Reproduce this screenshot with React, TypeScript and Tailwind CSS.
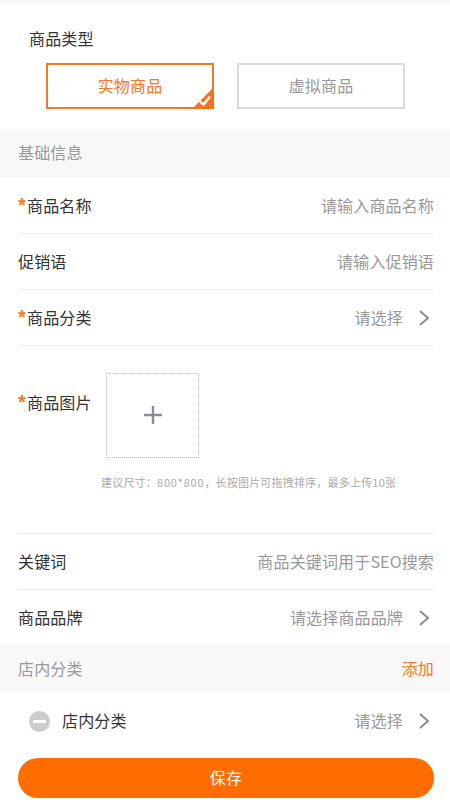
const font = { fontFamily: '"Noto Sans CJK SC", "Liberation Sans", sans-serif' }

function Chevron() {
  return (
    <svg width="12" height="18" viewBox="0 0 12 18" fill="none" className="ml-[15px] mr-[4px]">
      <path d="M2 2l8 7-8 7" stroke="#8a8a8a" strokeWidth="1.9" />
    </svg>
  )
}

function Star() {
  return <span className="inline-block w-[9px] font-['Liberation_Sans'] text-[20px] leading-[16px] font-bold text-[#f07a28]">*</span>
}

function Row({ label, value, required, arrow, border = true, height = 'h-[56px]' }: { label: string; value: string; required?: boolean; arrow?: boolean; border?: boolean; height?: string }) {
  return (
    <div className={`flex ${height} items-center justify-between text-[16px] ${border ? 'border-b border-[#eeeeee]' : ''}`}>
      <div className="-mt-[2px] text-[#333333]">
        {required && <Star />}
        {label}
      </div>
      <div className="flex items-center text-[#999999]">
        <span className="-mt-[2px]">{value}</span>
        {arrow && <Chevron />}
      </div>
    </div>
  )
}

function SectionHeader({ title, action }: { title: string; action?: string }) {
  return (
    <div className="flex h-[48px] items-center justify-between bg-[#f8f8f8] pb-[2px] pl-[18px] pr-[16px] text-[16px] text-[#999999]">
      <span>{title}</span>
      {action && <span className="text-[#f07a28]">{action}</span>}
    </div>
  )
}

export default function App() {
  return (
    <div className="h-[800px] w-[450px] overflow-hidden bg-white tracking-[0.15px]" style={font}>
      <div className="h-[4px] bg-[#f8f8f8]" />
      <div className="h-[125px] pl-[29px]">
        <div className="pt-[23px] text-[16px] leading-[22px] text-[#333333]">商品类型</div>
        <div className="ml-[17px] mt-[14px] flex gap-[23px] text-[16px]">
          <div className="relative flex h-[46px] w-[168px] items-center justify-center border-2 border-[#f07a28] pb-[2px] text-[#f07a28]">
            实物商品
            <svg width="22" height="22" viewBox="0 0 22 22" className="absolute bottom-[-2px] right-[-2px]">
              <path d="M22 0v22H0z" fill="#f5731c" />
              <path d="M8 14.5l3.5 3 6.5-8" fill="none" stroke="#ffffff" strokeWidth="2.6" />
            </svg>
          </div>
          <div className="flex h-[46px] w-[168px] items-center justify-center border-2 border-[#dadada] pb-[2px] text-[#999999]">
            虚拟商品
          </div>
        </div>
      </div>

      <SectionHeader title="基础信息" />

      <div className="pl-[18px] pr-[16px] pt-[1px]">
        <Row label="商品名称" value="请输入商品名称" required />
        <Row label="促销语" value="请输入促销语" />
        <Row label="商品分类" value="请选择" required arrow />

        <div className="h-[188px] border-b border-[#eeeeee]">
          <div className="flex pt-[27px]">
            <div className="w-[88px] pt-[18px] text-[16px] leading-[22px] text-[#333333]">
              <Star />商品图片
            </div>
            <div className="flex h-[85px] w-[93px] items-center justify-center border border-dotted border-[#c0c0c0] pb-[2px]">
              <svg width="20" height="20" viewBox="0 0 20 20">
                <path d="M10 1v18M1 10h18" stroke="#8c8c94" strokeWidth="2.4" />
              </svg>
            </div>
          </div>
          <div className="pl-[83px] pt-[15px] text-[11px] leading-[18px] tracking-[0.2px] text-[#aaaaaa]">
            建议尺寸：<span className="tracking-[0.8px]">800*800</span>，长按图片可拖拽排序，最多上传10张
          </div>
        </div>

        <Row label="关键词" value="商品关键词用于SEO搜索" />
        <Row label="商品品牌" value="请选择商品品牌" arrow border={false} height="h-[55px]" />
      </div>

      <SectionHeader title="店内分类" action="添加" />

      <div className="flex h-[56px] items-center justify-between pl-[29px] pr-[16px] text-[16px]">
        <div className="flex items-center gap-[12px] text-[#333333]">
          <div className="flex h-[21px] w-[21px] items-center justify-center rounded-full bg-[#cccccc]">
            <div className="h-[3px] w-[13px] bg-white" />
          </div>
          <span className="-mt-[2px]">店内分类</span>
        </div>
        <div className="flex items-center text-[#999999]">
          <span className="-mt-[2px]">请选择</span>
          <Chevron />
        </div>
      </div>

      <div className="pl-[18px] pr-[16px] pt-[9px]">
        <button className="flex h-[40px] w-full items-center justify-center rounded-full bg-[#ff6d00] pb-[2px] text-[16px] text-white">
          保存
        </button>
      </div>
    </div>
  )
}
